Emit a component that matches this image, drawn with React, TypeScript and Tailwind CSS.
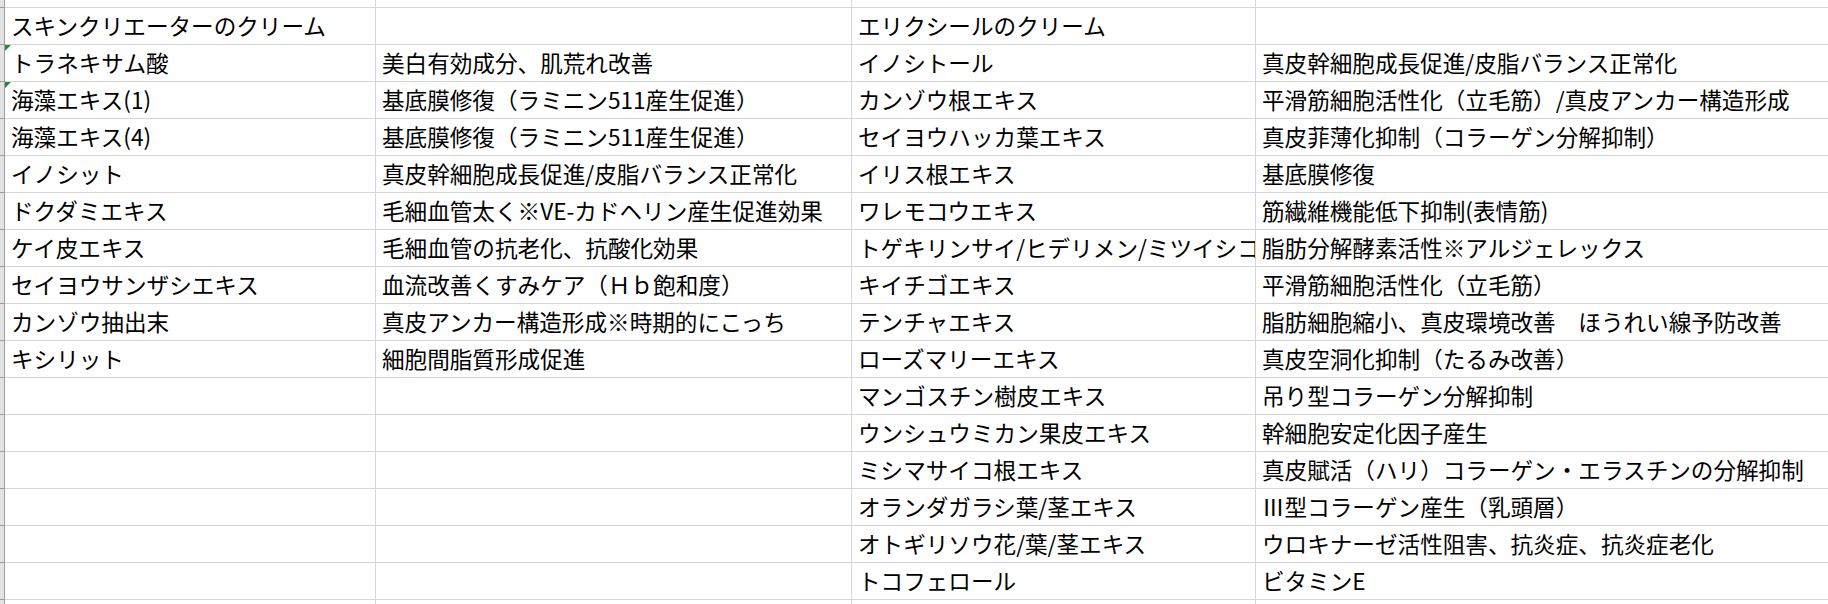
import React from 'react';

type Row = [string, string, string, string];

const rows: Row[] = [
  ['スキンクリエーターのクリーム', '', 'エリクシールのクリーム', ''],
  ['トラネキサム酸', '美白有効成分、肌荒れ改善', 'イノシトール', '真皮幹細胞成長促進/皮脂バランス正常化'],
  ['海藻エキス(1)', '基底膜修復（ラミニン511産生促進）', 'カンゾウ根エキス', '平滑筋細胞活性化（立毛筋）/真皮アンカー構造形成'],
  ['海藻エキス(4)', '基底膜修復（ラミニン511産生促進）', 'セイヨウハッカ葉エキス', '真皮菲薄化抑制（コラーゲン分解抑制）'],
  ['イノシット', '真皮幹細胞成長促進/皮脂バランス正常化', 'イリス根エキス', '基底膜修復'],
  ['ドクダミエキス', '毛細血管太く※VE-カドヘリン産生促進効果', 'ワレモコウエキス', '筋繊維機能低下抑制(表情筋)'],
  ['ケイ皮エキス', '毛細血管の抗老化、抗酸化効果', 'トゲキリンサイ/ヒデリメン/ミツイシコンブエキス', '脂肪分解酵素活性※アルジェレックス'],
  ['セイヨウサンザシエキス', '血流改善くすみケア（Ｈｂ飽和度）', 'キイチゴエキス', '平滑筋細胞活性化（立毛筋）'],
  ['カンゾウ抽出末', '真皮アンカー構造形成※時期的にこっち', 'テンチャエキス', '脂肪細胞縮小、真皮環境改善　ほうれい線予防改善'],
  ['キシリット', '細胞間脂質形成促進', 'ローズマリーエキス', '真皮空洞化抑制（たるみ改善）'],
  ['', '', 'マンゴスチン樹皮エキス', '吊り型コラーゲン分解抑制'],
  ['', '', 'ウンシュウミカン果皮エキス', '幹細胞安定化因子産生'],
  ['', '', 'ミシマサイコ根エキス', '真皮賦活（ハリ）コラーゲン・エラスチンの分解抑制'],
  ['', '', 'オランダガラシ葉/茎エキス', 'Ⅲ型コラーゲン産生（乳頭層）'],
  ['', '', 'オトギリソウ花/葉/茎エキス', 'ウロキナーゼ活性阻害、抗炎症、抗炎症老化'],
  ['', '', 'トコフェロール', 'ビタミンE'],
  ['', '', '', ''],
];

// 緑の三角（数値が文字列として保存されている警告）
const flagged = [1, 2];

const Cell = ({ text, className, flag }: { text: string; className: string; flag?: boolean }) => (
  <div
    className={`relative flex items-center overflow-hidden whitespace-nowrap border-r border-b border-[#d4d4d4] pl-[6px] ${className}`}
  >
    {flag && (
      <span className="absolute left-0 top-0 h-0 w-0 border-t-[6px] border-r-[6px] border-t-[#1e8a3a] border-r-transparent" />
    )}
    {text}
  </div>
);

const App = () => {
  return (
    <div
      className="h-[604px] w-[1828px] overflow-hidden bg-white text-[22.6px] leading-none text-black"
      style={{ fontFamily: '"Noto Sans CJK JP", "Noto Sans", sans-serif' }}
    >
      {/* 上の見切れた行 */}
      <div className="flex h-[8px]">
        <div className="w-[5px] shrink-0 border-r border-b border-r-[#9e9e9e] border-b-[#9e9e9e] bg-[#e3e3e3]" />
        <div className="w-[371px] shrink-0 border-r border-b border-[#d4d4d4]" />
        <div className="w-[476px] shrink-0 border-r border-b border-[#d4d4d4]" />
        <div className="w-[404px] shrink-0 border-r border-b border-[#d4d4d4]" />
        <div className="flex-1 border-b border-[#d4d4d4]" />
      </div>
      {rows.map((r, i) => (
        <div key={i} className="flex h-[37px]">
          <div className="w-[5px] shrink-0 border-r border-b border-r-[#9e9e9e] border-b-[#9e9e9e] bg-[#e3e3e3]" />
          <Cell text={r[0]} className="w-[371px] shrink-0" flag={flagged.includes(i)} />
          <Cell text={r[1]} className="w-[476px] shrink-0" />
          <Cell text={r[2]} className="w-[404px] shrink-0" />
          <Cell text={r[3]} className="flex-1 border-r-0" />
        </div>
      ))}
    </div>
  );
};

export default App;
